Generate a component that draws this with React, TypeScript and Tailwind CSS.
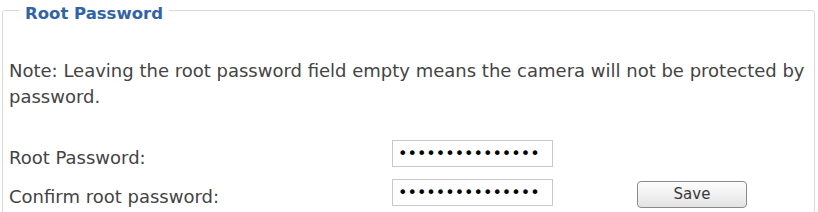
import React from 'react';

const font = { fontFamily: '"DejaVu Sans", Verdana, sans-serif' };

const PasswordField = () => (
  <input
    type="password"
    readOnly
    defaultValue="rootpassword123"
    className="h-[27px] w-[161px] border border-[#c9c9c9] bg-white pl-[5px] pr-[4px] text-[16px] text-black outline-none font-['DejaVu_Sans',sans-serif]"
  />
);

const App = () => {
  return (
    <div className="h-[212px] w-[818px] overflow-hidden bg-white text-[#444444] font-['DejaVu_Sans',Verdana,sans-serif]" style={font}>
      <fieldset className="-mt-[3px] ml-[2px] mr-[3px] h-[240px] rounded-[3px] border border-[#dadada] pl-[6px]">
        <legend className="ml-[10px] px-[6px] pt-[7px] text-[16.5px] font-bold leading-[20px] text-[#3263a8]">
          Root Password
        </legend>

        <p className="mt-[34px] text-[18px] leading-[26px]">
          <span className="whitespace-nowrap">
            Note: Leaving the root password field empty means the camera will not be protected by
          </span>
          <br />
          password.
        </p>

        <div className="mt-[30px] flex flex-col gap-[12px] text-[18px]">
          <div className="flex h-[27px] items-start">
            <span className="mt-[4px] w-[383px] leading-[27px]">Root Password:</span>
            <PasswordField />
          </div>
          <div className="flex h-[27px] items-start">
            <span className="mt-[4px] w-[383px] leading-[27px]">Confirm root password:</span>
            <PasswordField />
            <button className="ml-[84px] mt-[2px] h-[27px] w-[110px] rounded-[4px] border border-[#8a8a8a] bg-gradient-to-b from-[#fdfdfd] to-[#e4e4e4] text-[15px] text-[#3a3a3a]">
              Save
            </button>
          </div>
        </div>
      </fieldset>
    </div>
  );
};

export default App;
